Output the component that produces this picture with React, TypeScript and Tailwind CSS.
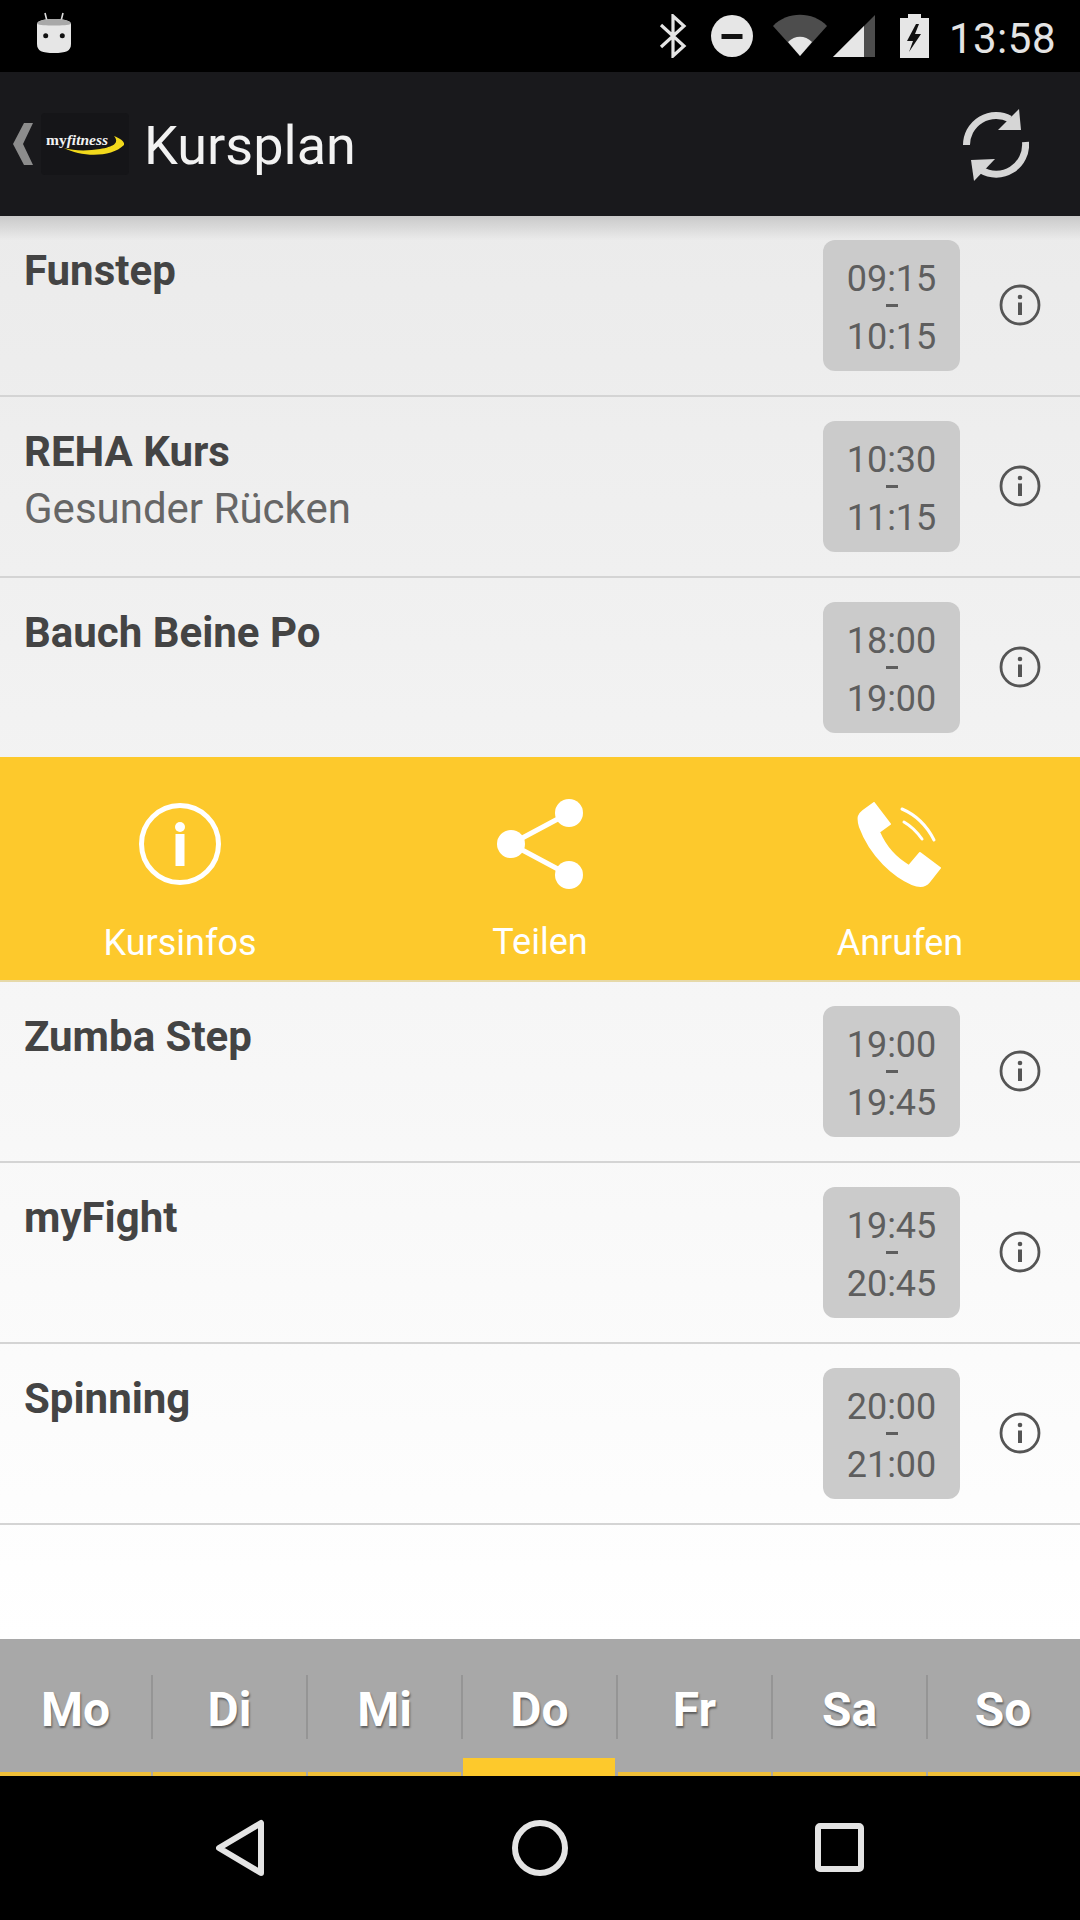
const font = "font-['Roboto','Liberation_Sans',sans-serif]";

type Course = { title: string; subtitle?: string; from: string; to: string };

const topCourses: Course[] = [
  { title: "Funstep", from: "09:15", to: "10:15" },
  { title: "REHA Kurs", subtitle: "Gesunder Rücken", from: "10:30", to: "11:15" },
  { title: "Bauch Beine Po", from: "18:00", to: "19:00" },
];

const bottomCourses: Course[] = [
  { title: "Zumba Step", from: "19:00", to: "19:45" },
  { title: "myFight", from: "19:45", to: "20:45" },
  { title: "Spinning", from: "20:00", to: "21:00" },
];

const days = ["Mo", "Di", "Mi", "Do", "Fr", "Sa", "So"];

function InfoIcon() {
  return (
    <svg width="42" height="42" viewBox="0 0 42 42" className="mb-[2px] shrink-0">
      <circle cx="21" cy="21" r="19" fill="none" stroke="#555" strokeWidth="2.8" />
      <circle cx="21" cy="13" r="2.3" fill="#555" />
      <rect x="19" y="18.5" width="4" height="12.5" fill="#555" />
    </svg>
  );
}

function CourseRow({ course, last }: { course: Course; last?: boolean }) {
  return (
    <div className={`flex pl-6 pt-6 ${last ? "h-[179px]" : "h-[181px] border-b-2 border-[#d4d4d4]"}`}>
      <div className="min-w-0 flex-1">
        <div className="mt-[11px] text-[42px] leading-[40px] font-bold text-[#444]">{course.title}</div>
        {course.subtitle && <div className="mt-[17px] text-[42px] leading-[40px] text-[#666]">{course.subtitle}</div>}
      </div>
      <div className="flex h-[131px] w-[137px] flex-col items-center rounded-[12px] bg-[#cbcbcb] pt-[18px] text-[36px] leading-[42px] text-[#5e5e5e]">
        <span>{course.from}</span>
        <span className="mt-[4px] h-[3px] w-[12px] bg-[#5e5e5e]" />
        <span className="mt-[9px]">{course.to}</span>
      </div>
      <div className="flex h-[131px] w-[120px] items-center justify-center">
        <InfoIcon />
      </div>
    </div>
  );
}

function ActionBar() {
  return (
    <div className="grid h-[225px] grid-cols-3 border-b-2 border-[#e6d9a8] bg-[#fdc92c] text-white">
      <div className="flex flex-col items-center pt-[45px]">
        <svg width="84" height="84" viewBox="0 0 84 84">
          <circle cx="42" cy="42" r="38.5" fill="none" stroke="#fff" strokeWidth="5" />
          <circle cx="42" cy="25" r="5" fill="#fff" />
          <rect x="37.5" y="32" width="9" height="32" fill="#fff" />
        </svg>
        <span className="mt-[35px] text-[36px] leading-[44px]">Kursinfos</span>
      </div>
      <div className="flex flex-col items-center pt-[41px]">
        <svg width="88" height="92" viewBox="0 0 88 92">
          <path d="M73 15 15 46 73 77" fill="none" stroke="#fff" strokeWidth="5" />
          <circle cx="73" cy="15" r="14" fill="#fff" />
          <circle cx="15" cy="46" r="14" fill="#fff" />
          <circle cx="73" cy="77" r="14" fill="#fff" />
        </svg>
        <span className="mt-[30px] text-[36px] leading-[44px]">Teilen</span>
      </div>
      <div className="flex flex-col items-center pt-[45px]">
        <svg width="86" height="86" viewBox="0 0 86 86">
          <path
            d="M17 1 33 22 22 30C28 44 38 56 52 64L63 51 83 66 72 80C68 85 62 85 55 82 38 75 14 55 3 25 0 15 2 12 6 9Z"
            fill="#fff"
            stroke="#fff"
            strokeWidth="2"
            strokeLinejoin="round"
          />
          <path d="M47 20C54 24 60 30 65 37" fill="none" stroke="#fff" strokeWidth="3" strokeLinecap="round" />
          <path d="M45 7C59 13 70 24 77 38" fill="none" stroke="#fff" strokeWidth="3" strokeLinecap="round" />
        </svg>
        <span className="mt-[33px] text-[36px] leading-[44px]">Anrufen</span>
      </div>
    </div>
  );
}

export default function App() {
  return (
    <div className={`flex h-[1920px] w-[1080px] flex-col overflow-hidden bg-black ${font}`}>
      {/* status bar */}
      <div className="flex h-[72px] shrink-0 items-center bg-black pr-[24px] pl-[36px] text-[#e4e4e4]">
        <svg width="36" height="44" viewBox="0 0 36 44" className="mb-[4px]">
          <path d="M9 1 11 9M27 1 25 9" stroke="#ddd" strokeWidth="1.6" />
          <path d="M1 12C1 8 11 7 18 7S35 8 35 12V32C35 39 30 41 18 41S1 39 1 32Z" fill="#e6e6e6" />
          <path d="M1 12C1 8 11 7 18 7S35 8 35 12C31 14 5 14 1 12Z" fill="#a8a8a8" />
          <circle cx="9.7" cy="23.7" r="2.5" fill="#111" />
          <circle cx="26.3" cy="23.7" r="2.5" fill="#111" />
        </svg>
        <div className="flex-1" />
        <svg width="28" height="44" viewBox="0 0 28 44" className="mr-[24px]">
          <path d="M2 33 25 12 14 2V42L25 32 2 11" fill="none" stroke="#e4e4e4" strokeWidth="3.2" />
        </svg>
        <svg width="42" height="42" viewBox="0 0 42 42" className="mr-[20px]">
          <circle cx="21" cy="21" r="21" fill="#e6e6e6" />
          <rect x="10.5" y="19" width="21" height="5" fill="#111" />
        </svg>
        <svg width="54" height="44" viewBox="0 0 54 44" className="mr-[6px]">
          <path d="M0 12C14-3 40-3 54 12L27 42Z" fill="#4d4d4d" />
          <path d="M15 28C22 21 32 21 39 28L27 42Z" fill="#e6e6e6" />
        </svg>
        <svg width="42" height="42" viewBox="0 0 42 42" className="mr-[25px]">
          <path d="M0 42 42 0V42Z" fill="#4d4d4d" />
          <path d="M0 42 31 11V42Z" fill="#e6e6e6" />
        </svg>
        <svg width="29" height="44" viewBox="0 0 29 44" className="mr-[20px]">
          <path d="M8 4V0H21V4H29V44H0V4Z" fill="#e6e6e6" />
          <path d="M16 10 7 27H13L9 38 21 20H15L19 10Z" fill="#111" />
        </svg>
        <span className="mt-[5px] text-[42px] leading-none tracking-[0.5px] text-[#e4e4e4]">13:58</span>
      </div>

      {/* app bar */}
      <div className="flex h-[144px] shrink-0 items-center bg-[#19191c]">
        <svg width="22" height="44" viewBox="0 0 22 44" className="ml-[12px]">
          <path d="M21 1H12L1 22 12 43H21L11 22Z" fill="#8c8c8c" />
        </svg>
        <div className="ml-[7px] h-[62px] w-[88px] rounded-[4px] bg-[#151518]">
          <svg width="88" height="62" viewBox="0 0 88 62">
            <text x="5" y="32" fontFamily="Liberation Serif" fontWeight="700" fontSize="15.5" fill="#f2f2f2">
              my<tspan fontStyle="italic">fitness</tspan>
            </text>
            <path
              d="M23 35C40 44 70 45 83 32 84 28 78 25 73 23 79 30 72 34 59 36 47 38 33 38 23 35Z"
              fill="#f2d91c"
            />
          </svg>
        </div>
        <span className="mt-[4px] ml-[15px] text-[54px] leading-none text-[#f2f2f2]">Kursplan</span>
        <div className="flex-1" />
        <svg width="66" height="74" viewBox="0 0 66 74" className="mt-[2px] mr-[51px]">
          <path d="M3.5 37A29.5 29.5 0 0 1 47 11" fill="none" stroke="#d6d6d6" strokeWidth="7" />
          <path d="M56 1 58 22 35 22Z" fill="#d6d6d6" />
          <path d="M62.5 34A29.5 29.5 0 0 1 18 62" fill="none" stroke="#d6d6d6" strokeWidth="7" />
          <path d="M11 73 8 52 32 51Z" fill="#d6d6d6" />
        </svg>
      </div>

      {/* course list */}
      <div className="relative flex-1 bg-gradient-to-b from-[#ebebeb] to-white">
        <div className="absolute inset-x-0 top-0 h-[24px] bg-gradient-to-b from-[#c9c9c9] to-transparent" />
        <div className="relative">
          {topCourses.map((c, i) => (
            <CourseRow key={c.title} course={c} last={i === 2} />
          ))}
          <ActionBar />
          {bottomCourses.map((c) => (
            <CourseRow key={c.title} course={c} />
          ))}
        </div>
      </div>

      {/* day tabs */}
      <div className="grid h-[137px] shrink-0 grid-cols-[153px_155px_155px_155px_155px_155px_1fr] bg-[#a8a8a8]">
        {days.map((d, i) => (
          <div key={d} className="relative">
            <div className="flex h-[128px] items-center justify-center pt-[14px] pr-[2px]">
              <span className="text-[48px] leading-none font-bold text-white [text-shadow:1px_2px_2px_rgba(0,0,0,0.45)]">
                {d}
              </span>
            </div>
            {i < 6 && <div className="absolute top-[36px] right-0 h-[64px] w-[2px] bg-[#959595]" />}
            <div
              className={`absolute bottom-0 left-0 ${i === 6 ? "right-0" : d === "Do" ? "right-[3px]" : "right-[2px]"} ${
                d === "Do" ? "h-[18px] bg-[#fdc92c]" : "h-[4px] bg-[#f0bf38]"
              }`}
            />
          </div>
        ))}
      </div>

      {/* nav bar */}
      <div className="flex h-[144px] shrink-0 items-center bg-black">
        <svg width="60" height="60" viewBox="0 0 60 60" className="ml-[216px]">
          <path d="M45 5V55L3 30Z" fill="none" stroke="#e4e4e4" strokeWidth="6" strokeLinejoin="round" />
        </svg>
        <svg width="56" height="56" viewBox="0 0 56 56" className="ml-[236px]">
          <circle cx="28" cy="28" r="25" fill="none" stroke="#e4e4e4" strokeWidth="6" />
        </svg>
        <svg width="50" height="50" viewBox="0 0 50 50" className="ml-[247px]">
          <rect x="3" y="3" width="43" height="43" rx="2" fill="none" stroke="#e4e4e4" strokeWidth="6" />
        </svg>
      </div>
    </div>
  );
}
